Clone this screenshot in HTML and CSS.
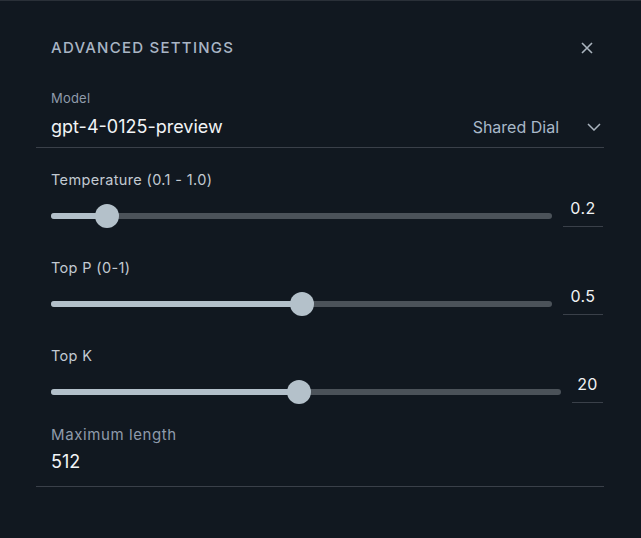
FILE: index.html
```html
<!DOCTYPE html>
<html>
<head>
<meta charset="utf-8">
<link rel="stylesheet" href="styles.css">
</head>
<body>
<div class="panel">
  <div class="header">
    <span class="title">ADVANCED SETTINGS</span>
    <svg class="close" width="12" height="12" viewBox="0 0 12 12"><path d="M1 1 L11 11 M11 1 L1 11" stroke="#aab4be" stroke-width="1.6" fill="none"/></svg>
  </div>
  <div class="field model">
    <div class="label">Model</div>
    <div class="model-row">
      <span class="value">gpt-4-0125-preview</span>
      <span class="dial">Shared Dial</span>
      <svg class="chev" width="14" height="8" viewBox="0 0 14 8"><path d="M1 1 L7 7 L13 1" stroke="#aab4be" stroke-width="1.5" fill="none"/></svg>
    </div>
  </div>
  <div class="field slider-field">
    <div class="label light">Temperature (0.1 - 1.0)</div>
    <div class="slider-row">
      <div class="track"><div class="fill" style="width:11.2%"></div><div class="thumb" style="left:11.2%"></div></div>
      <div class="num">0.2</div>
    </div>
  </div>
  <div class="field slider-field">
    <div class="label light">Top P (0-1)</div>
    <div class="slider-row">
      <div class="track"><div class="fill" style="width:50%"></div><div class="thumb" style="left:50%"></div></div>
      <div class="num">0.5</div>
    </div>
  </div>
  <div class="field slider-field">
    <div class="label light">Top K</div>
    <div class="slider-row">
      <div class="track"><div class="fill" style="width:48.7%"></div><div class="thumb" style="left:48.7%"></div></div>
      <div class="num narrow">20</div>
    </div>
  </div>
  <div class="field maxlen">
    <div class="label wide">Maximum length</div>
    <div class="value">512</div>
  </div>
</div>
</body>
</html>
```
FILE: styles.css
```css
html, body {
  margin: 0;
  padding: 0;
  background: #111820;
  height: 100%;
}
body {
  border-top: 1px solid #2a3038;
  box-sizing: border-box;
  font-family: Inter, "Noto Sans", sans-serif;
  color: #e8ecef;
}
.panel {
  padding: 0 37px 0 36px;
}
.header {
  display: flex;
  align-items: center;
  justify-content: space-between;
  padding: 37px 11px 0 15px;
  height: 20px;
}
.title {
  font-size: 15px;
  letter-spacing: 1.25px;
  color: #a9b5c5;
  font-weight: 500;
  line-height: 20px;
}
.close { display: block; }
.field {
  padding: 0 15px;
}
.model {
  margin-top: 31px;
  border-bottom: 1px solid #3a4049;
  padding-bottom: 8px;
}
.label {
  font-size: 13px;
  letter-spacing: 0.2px;
  color: #8f9bab;
  line-height: 18px;
}
.label.light {
  font-size: 14.5px;
  letter-spacing: 0.35px;
  color: #c2cad2;
}
.label.wide {
  font-size: 15px;
  letter-spacing: 0.6px;
}
.model-row {
  display: flex;
  align-items: center;
  margin-top: 8px;
  height: 24px;
}
.value {
  font-size: 18px;
  color: #f2f4f6;
  line-height: 24px;
}
.model-row .value { flex: 1; }
.dial {
  font-size: 16px;
  color: #a9b9c9;
  margin-right: 28px;
}
.chev { display: block; margin-right: -12px; }
.slider-field {
  margin-top: 23px;
  padding-right: 1px;
}
.slider-field + .slider-field { margin-top: 28px; }
.slider-row {
  display: flex;
  align-items: center;
  margin-top: 12px;
  height: 30px;
}
.track {
  flex: 1;
  position: relative;
  height: 6px;
  border-radius: 3px;
  background: #4b5259;
  margin-right: 11px;
}
.fill {
  position: absolute;
  left: 0; top: 0; bottom: 0;
  background: #b3c0ca;
  border-radius: 3px;
}
.thumb {
  position: absolute;
  top: 50%;
  width: 24px;
  height: 24px;
  margin: -12px 0 0 -12px;
  border-radius: 50%;
  background: #b4c1ca;
}
.num {
  align-self: flex-start;
  margin-top: -4px;
  width: 40px;
  text-align: center;
  font-size: 16px;
  letter-spacing: 0.4px;
  color: #f0f2f4;
  border-bottom: 1px solid #3a4049;
  line-height: 22px;
  padding-bottom: 7px;
}
.num.narrow { width: 31px; }
.maxlen {
  margin-top: 19px;
  border-bottom: 1px solid #3a4049;
  padding-bottom: 12px;
}
.maxlen .value { margin-top: 6px; }
```
